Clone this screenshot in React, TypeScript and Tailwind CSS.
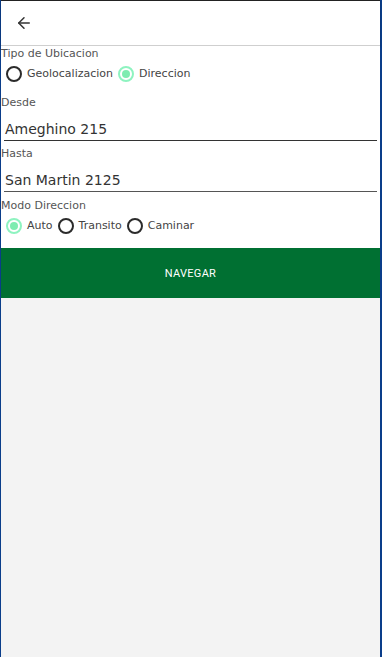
import { ArrowLeft } from "lucide-react";

const font = { fontFamily: '"DejaVu Sans", "Noto Sans", sans-serif' };

function Radio({ label, checked }: { label: string; checked?: boolean }) {
  return (
    <div className="flex items-center gap-[5px]">
      {checked ? (
        <span className="w-4 h-4 rounded-full border-2 border-[#8ef3c0] flex items-center justify-center">
          <span className="w-2 h-2 rounded-full bg-[#7eecb0]" />
        </span>
      ) : (
        <span className="w-4 h-4 rounded-full border-2 border-[#2b2b2b]" />
      )}
      <span className="text-[11px] text-[#444]">{label}</span>
    </div>
  );
}

export default function App() {
  return (
    <div className="h-[657px] w-[382px] bg-[#f3f3f3] border-l border-r-2 border-[#0a3d8a] flex flex-col" style={font}>
      {/* Header */}
      <div className="h-[46px] bg-white border-t border-[#222] flex items-center pl-[14px] shadow-[0_1px_2px_rgba(0,0,0,0.25)] border-b border-b-[#cfcfcf]">
        <ArrowLeft size={18} strokeWidth={2} className="text-[#333]" />
      </div>

      <div className="bg-white flex flex-col">
        <div className="text-[11px] text-[#555] pt-[1px] leading-[14px]">Tipo de Ubicacion</div>
        <div className="flex items-center gap-[5px] pl-[5px] h-[26px]">
          <Radio label="Geolocalizacion" />
          <Radio label="Direccion" checked />
        </div>

        <div className="text-[11px] text-[#555] pt-[9px] leading-[14px]">Desde</div>
        <div className="mx-[3px] border-b border-[#333] pt-[8px]">
          <span className="block text-[14px] text-[#333] pl-[1px] leading-[22px]">Ameghino 215</span>
        </div>

        <div className="text-[11px] text-[#555] pt-[6px] leading-[14px]">Hasta</div>
        <div className="mx-[3px] border-b border-[#555] pt-[8px]">
          <span className="block text-[14px] text-[#333] pl-[1px] leading-[22px]">San Martin 2125</span>
        </div>

        <div className="text-[11px] text-[#555] pt-[7px] leading-[14px]">Modo Direccion</div>
        <div className="flex items-center gap-[5px] pl-[5px] h-[26px] mb-[9px]">
          <Radio label="Auto" checked />
          <Radio label="Transito" />
          <Radio label="Caminar" />
        </div>
      </div>

      <button className="h-[50px] w-full bg-[#007032] text-white text-[11px] tracking-wide pt-[3px]" style={{ fontFamily: "Roboto, sans-serif" }}>
        NAVEGAR
      </button>
    </div>
  );
}
